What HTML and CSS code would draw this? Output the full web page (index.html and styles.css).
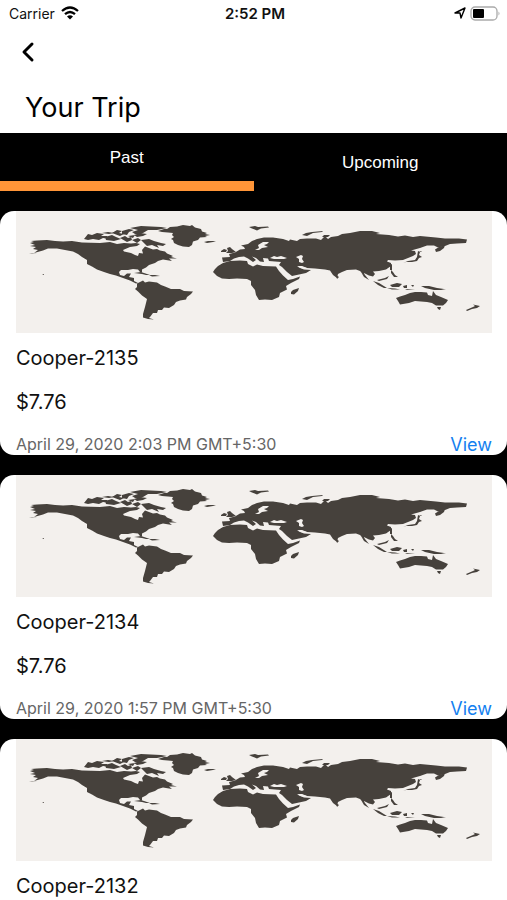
FILE: index.html
```html
<!DOCTYPE html>
<html lang="en">
<head>
    <meta charset="UTF-8">
    <meta name="viewport" content="width=device-width, initial-scale=1.0">
    <title>Your Trip</title>
    <link rel="stylesheet" href="styles.css">
</head>
<body>
    <!-- world map, reused in every card -->
    <svg class="defs" width="0" height="0" aria-hidden="true">
        <symbol id="world" viewBox="16 211 476 122" preserveAspectRatio="none">
            <g class="land">
                <!-- north america -->
                <path d="M30 243L34 242 31 241 37 240.500 47 240 55 241 63 241.500 72 241 82 242.500 100 243 110 242 117 244 124 243 131 243.500 136 243 140 244 137 246 130 247 123 250 124 251.500 131 253 135 255 138 256 139 253 143 253.500 142 250 145 246.500 149 248 153 249.500 157 249 160 250.500 165 251.500 167 253.500 173 256 171 257 177 258.500 169 258.500 172 261 163 259.500 158 261 155 263 149 265 146 267.500 142 269.500 142 272.500 140 272 138 269.500 133 269 128 270 121 270 119 272 120 275 124 276 127 273.500 131 273.500 129 277 134 278 134 281 138 283 136 283.500 130 280.500 123 278 116 275.500 110 274 104 272 97 269.500 92 266.500 87 264 87 260 82 257 78 254 73 251.500 65 250 57 248.500 48 248.500 43 250.500 34 253 38 250 33 249 36 247 30 246 35 245z"/>
                <!-- arctic islands -->
                <path d="M84 239l4-5 4 1 5-2 7 1-3 2 6 0 2 3-6-1-4 2-6-1-5 1zM92 236l6-1 5 2-8 2zM105 237l7-2 4 2 5 2-7 2-8-1zM102 233l6-1 6 1-5 1zM112 233l5-3 5 1-3 2 5 1-4 2zM122 231l7-2 5 1-5 2-2 3-5-1zM120 238l5-2 3 2 3-1 1 3-5 2zM128 236l7-1-2 3zM130 228l11-2 20 1 6 1-10 2-9 0-5 3-8 1-3-2 6-2zM134 235l6-2 7 1-4 2-6 1zM132 240l6-2 3 2-4 3zM141 240l8-1 5 2 7 2 5 1-3 2-6-1 2 3-7-3-5 1z"/>
                <!-- caribbean, hawaii, aleutians -->
                <path d="M134 273l7-1 9 3-4 0-4-1zM149 275l6 0 5 1-8 .500zM42 274l2 0 0 1zM29 254l8-1-5 1z"/>
                <!-- greenland and iceland -->
                <path d="M158 231L164 229 167 229 170 227 177 226.500 183 225 190 226 192 225 195 227.500 201 229 202 231.500 207 233 205 234 210 235 205 236 207 237 200 237.500 198 240 193 241.500 192 245 189 247 183 246.500 178 245 174 243 173 240 171 239 174 237 172 235 173 233 168 232.500 162 232zM204 242l4-1 8 0-3 1-6 1z"/>
                <!-- south america -->
                <path d="M135 289L137 287 137 283.500 140 282 143 280.500 145 282.500 149 281.500 157 282.500 161 285 165 286.500 171 289 180 289 184 291 193 291.500 191 294 187 297 186 299.500 180 300.500 176 302 174 305 169 308 164 307.500 162 310 158 310 157 313 153 313 150 317 149 318 154 319.500 148 319 143 317.500 143 314 145 307 147 299 142 295.500 138 291.500z"/>
                <!-- africa and madagascar -->
                <path d="M213 272L215 269 218 266 223 263 230 261 240 260.500 247 261 248 264 253 266.500 257 264.500 263 266 276 266.500 279 271 283 275.500 288 280 293 279 300 276.500 299 279 291 283 286 286 287 289.500 280 293 279 297 272 300 265 299.500 259 300 256 295 255 290 251 285 251 281 247 279 237 278.500 229 279 222 278.500 217 276zM291 292L293 290 299 288 298 291 294 294.500 291 294z"/>
                <!-- british isles, svalbard, novaya zemlya -->
                <path d="M221 251l3-2 3 1-1 2-5 0zM227 248l3-1 2 2 4 3-4 1-6 0 2-2zM249 227l6-1 3 1 10-.500 1 1-8 1-4 2-5-2zM302 235l4-2 6-1 11-1-1 1-9 1-6 3zM322 237l2-2 6 0-2 2z"/>
                <!-- eurasia -->
                <path d="M223 262L222 257.500 230 257 229 254 235 252.500 240 249.500 245 249 244 247 241 245.500 248 244 252 241 257 239 264 237.500 273 237.500 283 239 289 241 290 239.500 297 241 300 239 307 238.500 316 238.500 321 240 325 236 328 239 331 237 338 236 342 234 350 233 360 231 372 231 380 233 376 234 389 235 398 236.500 405 235.500 413 237 420 236 436 237.500 445 238.500 459 238.500 467 239.500 466 243 457 243.500 450 244 445 246 438 247.500 434 245.500 427 245.500 420 248 411 250.500 415 251 416 254 413 256 408 258 403 260 395 260.500 388 260 387 261.500 391 263 391 266 386 269.500 379 271 373 271.500 375 274 373 276.500 369 275.500 364 273 365 276 360 271 356 269.500 347 270 342 272 338 274 337 278 333 275 330 270.500 325 269.500 315 268.500 307 268 300 266 297 266.500 304 269.500 311 270 306 273 299 274.500 292 276 287 272 282 267 279 265 281 262 275 261.500 269 261 268 258.500 263 258 264 262 260 261.500 256 258 252 256.500 256 260 253 262 248 258.500 244 256.500 239 257 234 258.500 230 261z"/>
                <!-- japan and kamchatka -->
                <path d="M435 249.500L439 247 445 245 444 248 440 251 436 252zM403 263l5-2 7-1 2-3 1-6 2 1-1 3 3 2-3 1-2 3-5 1-6 0zM418 252l4-1-1 1z"/>
                <!-- south east asia -->
                <path d="M390 265l2-1 0 6-2 0zM391 270l2 2 2 3 3 2-4 0-3-4zM361 272l4 3 4 5-5-3zM373 281l6 2 8 5-3 0-6-3zM377 280l8-2 4-2-2 3-8 2zM390 285l7-2 5 1-3 3-7 0zM387 288l8 .500 5 1-8 0zM403 286l4-1 0 3-3 0zM411 285l3 0-1 2zM421 286l8 0 8 2 7 1 2 0-5 1-7 0-9-2zM405 289l10 1-8 0zM336 275l3 2-2 2z"/>
                <!-- australia, tasmania, new zealand -->
                <path d="M396 298L400 296.500 405 295 410 293 415 292 421 292 427 292.500 428 295 432 296 433 291 436 295 441 297 448 300 446 303 443 305.500 436 305.500 432 303 427 302 415 301 409 303 400 304.500 398 301zM437 307l4 0-1 3-2-1zM466 310L473 307 475 306 473 304.500 480 306 477 308 472 309 467 311z"/>
            </g>
            <!-- inland seas -->
            <path class="sea" d="M255 250l4-2-1-3 5-3 6 0-2 2-3 1 4 2-6 1-3 2zM270 258l4-2 3 1 4-1 6 2-3 1-10 0zM296 257l5-2 2 1-1 3 2 3-2 1-3-1 0-3zM298 266l4 0 5 2-2 1-5-1z"/>
        </symbol>
    </svg>

    <div class="app">
        <header class="header">
            <div class="status-bar">
                <div class="status-left">
                    <span>Carrier</span>
                    <svg class="wifi" viewBox="0 0 18 14">
                        <path d="M1 5Q9-2 17 5M4 8.200Q9 3.800 14 8.200" fill="none" stroke="#000" stroke-width="2.300"/>
                        <path d="M6 10.500Q9 8 12 10.500L9 13.500z"/>
                    </svg>
                </div>
                <div class="status-time">2:52 PM</div>
                <div class="status-right">
                    <svg class="location" viewBox="0 0 12 12">
                        <path d="M1 6L11 1 7 11 6 6z" fill="none" stroke="#000" stroke-width="1.400" stroke-linejoin="round"/>
                    </svg>
                    <svg class="battery" viewBox="0 0 31 15">
                        <rect x="1" y="1" width="26" height="13" rx="4" fill="none" stroke="#aaa" stroke-width="1.300"/>
                        <rect x="3" y="3" width="11" height="9" rx="1"/>
                        <path d="M28.500 5.500q2 2 0 4z" fill="#aaa"/>
                    </svg>
                </div>
            </div>
            <button class="back-btn" type="button" aria-label="Back">
                <svg viewBox="0 0 14 22"><path d="M11 3L3 11l8 8" fill="none" stroke="#000" stroke-width="3" stroke-linecap="round" stroke-linejoin="round"/></svg>
            </button>
            <h1 class="title">Your Trip</h1>
        </header>

        <nav class="tabs">
            <button class="tab active" type="button">Past</button>
            <button class="tab" type="button">Upcoming</button>
        </nav>

        <main class="trips">
            <article class="card">
                <svg class="map" role="img" aria-label="Map"><use href="#world"/></svg>
                <h2 class="name">Cooper-2135</h2>
                <div class="price">$7.76</div>
                <div class="card-footer">
                    <span class="date">April 29, 2020 2:03 PM GMT+5:30</span>
                    <a class="view" href="#">View</a>
                </div>
            </article>
            <article class="card">
                <svg class="map" role="img" aria-label="Map"><use href="#world"/></svg>
                <h2 class="name">Cooper-2134</h2>
                <div class="price">$7.76</div>
                <div class="card-footer">
                    <span class="date">April 29, 2020 1:57 PM GMT+5:30</span>
                    <a class="view" href="#">View</a>
                </div>
            </article>
            <article class="card">
                <svg class="map" role="img" aria-label="Map"><use href="#world"/></svg>
                <h2 class="name">Cooper-2132</h2>
            </article>
        </main>
    </div>
</body>
</html>
```
FILE: styles.css
```css
* {
    box-sizing: border-box;
}
body {
    margin: 0;
    background-color: #000;
    font-family: Inter, "Liberation Sans", sans-serif;
    color: #111;
}
.defs {
    position: absolute;
}
.app {
    display: flex;
    flex-direction: column;
    height: 100vh;
}
.header {
    background-color: #fff;
}
.status-bar {
    display: grid;
    grid-template-columns: 1fr auto 1fr;
    align-items: center;
    height: 26px;
    padding: 0 6px 0 9px;
    font-size: 14px;
}
.status-left,
.status-right {
    display: flex;
    align-items: center;
    gap: 6px;
}
.status-right {
    justify-content: flex-end;
    gap: 4px;
}
.status-time {
    font-size: 15px;
    font-weight: 600;
}
.wifi {
    width: 18px;
    height: 14px;
}
.location {
    width: 12px;
    height: 12px;
}
.battery {
    width: 31px;
    height: 15px;
}
.back-btn {
    display: block;
    margin-left: 16px;
    padding: 15px 5px 13px;
    border: none;
    background: none;
    cursor: pointer;
}
.back-btn svg {
    display: block;
    width: 14px;
    height: 22px;
}
.title {
    margin: 0;
    padding: 14px 25px 7px;
    font-size: 27px;
    font-weight: 400;
    line-height: 36px;
    color: #000;
}
.tabs {
    display: flex;
    flex-shrink: 0;
    height: 58px;
}
.tab {
    flex: 1;
    padding: 2px 0 0;
    border: none;
    background-color: #000;
    color: #fff;
    font-family: "Liberation Sans", Arial, sans-serif;
    font-size: 17px;
    cursor: pointer;
}
.tab.active {
    border-bottom: 10px solid #ff9538;
}
.trips {
    flex: 1;
    min-height: 0;
    padding-top: 20px;
    overflow-y: auto;
    scrollbar-width: none;
}
.card {
    margin-bottom: 20px;
    padding: 0 15px 0 16px;
    background-color: #fff;
    border-radius: 14px;
    overflow: hidden;
}
.map {
    display: block;
    width: 100%;
    height: 122px;
    background-color: #f3f0ed;
}
.land {
    fill: #46413c;
}
.sea {
    fill: #f3f0ed;
}
.name,
.price {
    margin: 0;
    font-size: 20px;
    font-weight: 400;
    line-height: 24px;
}
.name {
    padding: 13px 0 20px;
}
.price {
    padding-bottom: 20px;
}
.card-footer {
    display: flex;
    align-items: center;
    justify-content: space-between;
    line-height: 21px;
}
.date {
    font-size: 16px;
    color: #666;
}
.view {
    font-size: 18px;
    color: #1480f0;
    text-decoration: none;
}
```
